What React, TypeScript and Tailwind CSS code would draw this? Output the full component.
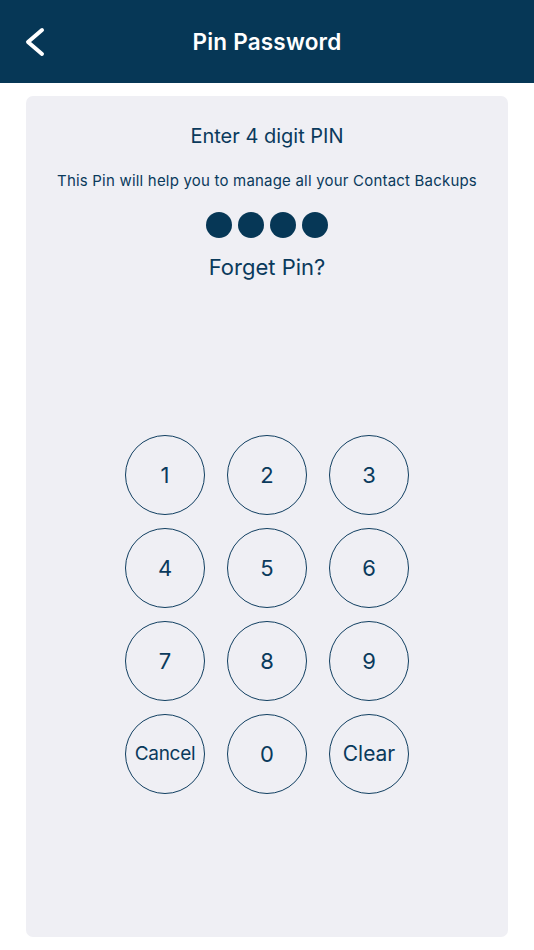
import React from "react";

const keys = ["1", "2", "3", "4", "5", "6", "7", "8", "9", "Cancel", "0", "Clear"];

export default function App() {
  return (
    <div
      className="w-[534px] h-[950px] bg-white flex flex-col"
      style={{ fontFamily: "Inter, 'Noto Sans', sans-serif" }}
    >
      {/* Header */}
      <div className="h-[83px] bg-[#063756] flex items-center relative">
        <button className="absolute left-[20px] top-[26px] w-[28px] h-[32px] flex items-center justify-center">
          <svg width="24" height="30" viewBox="0 0 24 30" fill="none">
            <path d="M20 3 L6 15 L20 27" stroke="white" strokeWidth="4" strokeLinecap="round" strokeLinejoin="round" />
          </svg>
        </button>
        <h1 className="flex-1 text-center text-white text-[22.5px] font-semibold tracking-[0.2px]">Pin Password</h1>
      </div>

      {/* Card */}
      <div className="mx-[26px] mt-[13px] h-[841px] bg-[#efeff4] rounded-[7px] flex flex-col items-center text-[#0a3a5c]">
        <div className="mt-[26px] text-[20px] leading-[28px]">Enter 4 digit PIN</div>
        <div className="mt-[21px] text-[15px] leading-[20px] tracking-[0.2px]">
          This Pin will help you to manage all your Contact Backups
        </div>
        <div className="mt-[21px] flex gap-[6px]">
          {[0, 1, 2, 3].map((i) => (
            <div key={i} className="w-[26px] h-[26px] rounded-full bg-[#063756]" />
          ))}
        </div>
        <div className="mt-[13px] text-[22px] leading-[32px]">Forget Pin?</div>

        <div className="mt-[152px] grid grid-cols-3 gap-x-[22px] gap-y-[13px]">
          {keys.map((k) => (
            <button
              key={k}
              className={`w-[80px] h-[80px] rounded-full border-[1.7px] border-[#113f61] flex items-center justify-center ${
                k === "Cancel" ? "text-[19px] tracking-[-0.3px]" : k === "Clear" ? "text-[21px]" : "text-[22px]"
              }`}
            >
              {k}
            </button>
          ))}
        </div>
      </div>
    </div>
  );
}
